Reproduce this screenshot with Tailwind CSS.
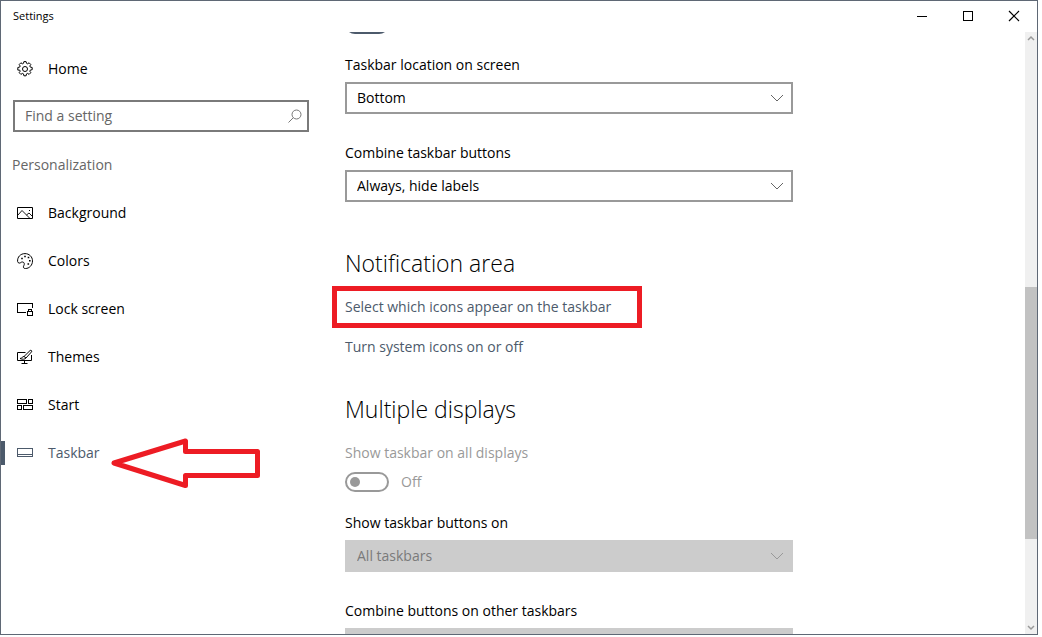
<!DOCTYPE html>
<html lang="en">

<head>
    <meta charset="UTF-8" />
    <meta name="viewport" content="width=device-width, initial-scale=1.0" />
    <title>Settings</title>
    <script src="https://cdn.jsdelivr.net/npm/@tailwindcss/browser@4"></script>
</head>

<body class="h-screen overflow-hidden bg-white pr-1 pb-0.5 font-['Open_Sans','Noto_Sans',sans-serif] text-sm text-black">

    <div class="flex h-full flex-col border border-[#5f6875] bg-white">

        <!-- Title bar -->
        <header class="flex h-[31px] shrink-0 items-center justify-between pb-0.5 pl-3">
            <h1 class="text-[11px]">Settings</h1>
            <div class="flex">
                <button aria-label="Minimize" class="flex w-[46px] justify-center">
                    <svg class="size-3" viewBox="0 0 12 12" fill="none" stroke="#000" shape-rendering="crispEdges"><path d="M1 6.5h10" /></svg>
                </button>
                <button aria-label="Maximize" class="flex w-[46px] justify-center">
                    <svg class="size-3" viewBox="0 0 12 12" fill="none" stroke="#000" shape-rendering="crispEdges"><path d="M1.5 1.5h9v9h-9z" /></svg>
                </button>
                <button aria-label="Close" class="flex w-[46px] justify-center">
                    <svg class="size-3" viewBox="0 0 12 12" fill="none" stroke="#000" stroke-width="1.2"><path d="M1 1l10 10M11 1L1 11" /></svg>
                </button>
            </div>
        </header>

        <div class="flex min-h-0 flex-1">

            <!-- Sidebar -->
            <aside class="w-82 shrink-0 pt-[13px]">
                <a href="#" class="flex h-12 items-center gap-[15px] pl-4">
                    <svg class="size-4" viewBox="0 0 16 16" fill="none" stroke="#000">
                        <path d="M6.9.6h2.2l.4 1.7 1.1.5 1.5-1 1.7 1.7-1 1.5.5 1.1 1.9.4v2.2l-1.9.4-.5 1.1 1 1.5-1.7 1.7-1.5-1-1.1.5-.4 1.9H6.9l-.4-1.9-1.1-.5-1.5 1-1.7-1.7 1-1.5-.5-1.1L.8 9.100V6.500l1.900-.4.5-1.100-1-1.500 1.700-1.700 1.500 1 1.100-.5z" />
                        <circle cx="8" cy="8" r="2.5" />
                    </svg>
                    Home
                </a>

                <div class="relative mt-[7px] mr-5 ml-3">
                    <input type="search" aria-label="Find a setting" placeholder="Find a setting" class="block h-8 w-full appearance-none border-2 border-[#7a7a7a] pr-8 pb-0.5 pl-2.5 placeholder:text-[#666]" />
                    <svg class="pointer-events-none absolute top-2 right-1.5 size-4" viewBox="0 0 16 16" fill="none" stroke="#777">
                        <circle cx="9.5" cy="6.5" r="4.5" />
                        <path d="M6.3 9.7L1.5 14.5" />
                    </svg>
                </div>

                <h2 class="mt-[23px] pl-[11px] leading-5 text-[#666]">Personalization</h2>

                <nav class="mt-3.5">
                    <a href="#" class="flex h-12 items-center gap-[15px] pl-4">
                        <svg class="size-4" viewBox="0 0 16 16" fill="none" stroke="#000">
                            <path d="M.5 2.5h15v11H.5z" />
                            <path stroke-width=".9" d="M1 10l4-4.500 7.500 7.500M9.500 10l2.500-2 3.500 3.500" />
                            <path d="M12 5.500h1" />
                        </svg>
                        Background
                    </a>
                    <a href="#" class="flex h-12 items-center gap-[15px] pl-4">
                        <svg class="size-4" viewBox="0 0 16 16" fill="none" stroke="#000">
                            <path d="M.6 8.500C.2 4 3.500.6 8 .6c4.200 0 7.500 3.200 7.500 7.300 0 4.300-3.200 7.600-7 7.600-2.200 0-2.600-1.300-1.700-2.800.9-1.600.6-3.400-1.100-3.700-1.600-.3-2 1.200-3.400 1.100C1.300 10 .7 9.400.6 8.500z" />
                            <path stroke-width="1.6" d="M4.200 5.500h1.600M7.200 3.500h1.600M10.700 4.500h1.600M12 7.800h1.600M10.500 11h1.600" />
                        </svg>
                        Colors
                    </a>
                    <a href="#" class="flex h-12 items-center gap-[15px] pl-4">
                        <svg class="size-4" viewBox="0 0 16 16" fill="none" stroke="#000" shape-rendering="crispEdges">
                            <path d="M9 11.500H.5v-9h15V7" />
                            <path d="M10.500 10.500h5v4h-5zM11.500 10V8.500h3V10" />
                        </svg>
                        Lock screen
                    </a>
                    <a href="#" class="flex h-12 items-center gap-[15px] pl-4">
                        <svg class="size-4" viewBox="0 0 16 16" fill="none" stroke="#000">
                            <path d="M8.500 3.500h-8v8h14V6M7.500 12v2M4.500 14.500h6" />
                            <path d="M7 7.500L13 1.600c1-.9 2.300.2 1.500 1.300L9 9M7 7.500L9 9M7 7.500C5.500 7.300 5 9.500 3 9.500c2 1.200 5.500.8 6-.5" />
                        </svg>
                        Themes
                    </a>
                    <a href="#" class="flex h-12 items-center gap-[15px] pl-4">
                        <svg class="size-4" viewBox="0 0 16 16" fill="none" stroke="#000" shape-rendering="crispEdges">
                            <path d="M.5 2.500h9v4h-9zM11.500 2.500h4v4h-4zM.5 8.500h4v4h-4zM6.500 8.500h9v4h-9z" />
                        </svg>
                        Start
                    </a>
                    <a href="#" aria-current="page" class="relative flex h-12 items-center gap-[15px] pl-4 text-[#4c5a6b]">
                        <span class="absolute left-0 h-6 w-1 bg-[#4c5a6b]"></span>
                        <svg class="size-4" viewBox="0 0 16 16" fill="none" stroke="#4c5a6b" shape-rendering="crispEdges">
                            <path d="M.5 3.500h15v8H.5zM1 9.500h14" />
                        </svg>
                        Taskbar
                        <!-- Arrow pointing at the current page -->
                        <svg class="absolute top-2 left-[109px] h-[52px] w-[152px]" viewBox="0 0 152 52" fill="none" stroke="#ed1c24" stroke-width="5">
                            <path stroke-linejoin="round" d="M4 26L75.500 4v10.500h72v24h-72V48.500z" />
                        </svg>
                    </a>
                </nav>
            </aside>

            <!-- Taskbar page, scrolled part of the way down -->
            <main class="min-w-0 flex-1 overflow-hidden pl-4">
                <div class="max-w-md">
                    <button role="switch" aria-checked="true" aria-label="Replace Command Prompt" class="-mt-[18px] block h-5 w-11 rounded-full bg-[#4c5a6b]"></button>

                    <label for="location" class="mt-[21px] block leading-5">Taskbar location on screen</label>
                    <div class="relative mt-[7px]">
                        <select id="location" class="block h-8 w-full appearance-none border-2 border-[#999] bg-white px-2.5">
                            <option>Bottom</option>
                        </select>
                        <svg class="pointer-events-none absolute top-2.5 right-2.5 size-3" viewBox="0 0 12 12" fill="none" stroke="#666"><path d="M0 3l6 6 6-6" /></svg>
                    </div>

                    <label for="combine" class="mt-[29px] block leading-5">Combine taskbar buttons</label>
                    <div class="relative mt-[7px]">
                        <select id="combine" class="block h-8 w-full appearance-none border-2 border-[#999] bg-white px-2.5">
                            <option>Always, hide labels</option>
                        </select>
                        <svg class="pointer-events-none absolute top-2.5 right-2.5 size-3" viewBox="0 0 12 12" fill="none" stroke="#666"><path d="M0 3l6 6 6-6" /></svg>
                    </div>

                    <h2 class="mt-[45px] text-[23px] leading-8 font-light">Notification area</h2>
                    <a href="#" class="mt-[7px] -ml-[13px] block h-[42px] w-[310px] border-5 border-[#ed1c24] pl-2 leading-8 text-[#4c5a6b]">Select which icons appear on the taskbar</a>
                    <a href="#" class="mt-[9px] block leading-5 text-[#4c5a6b]">Turn system icons on or off</a>

                    <h2 class="mt-9 text-[23px] leading-8 font-light">Multiple displays</h2>
                    <p id="all-displays" class="mt-[18px] leading-5 text-[#999]">Show taskbar on all displays</p>
                    <div class="mt-[9px] flex items-center gap-3 text-[#999]">
                        <button role="switch" aria-checked="false" aria-labelledby="all-displays" disabled class="flex h-5 w-11 items-center rounded-full border-2 border-[#999] pl-[3px]">
                            <span class="size-2.5 rounded-full bg-[#999]"></span>
                        </button>
                        <span class="leading-5">Off</span>
                    </div>

                    <label for="buttons-on" class="mt-[21px] block leading-5">Show taskbar buttons on</label>
                    <div class="relative mt-[7px]">
                        <select id="buttons-on" disabled class="block h-8 w-full appearance-none bg-[#ccc] px-3 text-[#7a7a7a] opacity-100">
                            <option>All taskbars</option>
                        </select>
                        <svg class="pointer-events-none absolute top-2.5 right-2.5 size-3" viewBox="0 0 12 12" fill="none" stroke="#999"><path d="M0 3l6 6 6-6" /></svg>
                    </div>

                    <label for="combine-other" class="mt-[29px] block leading-5">Combine buttons on other taskbars</label>
                    <select id="combine-other" disabled class="mt-[7px] block h-8 w-full appearance-none bg-[#ccc] px-3 text-[#7a7a7a] opacity-100">
                        <option>Always, hide labels</option>
                    </select>
                </div>
            </main>

            <!-- Scroll bar -->
            <div class="flex w-3 shrink-0 flex-col items-center bg-[#f0f0f0]">
                <svg class="h-3 w-2 shrink-0" viewBox="0 0 8 12" fill="none" stroke="#999" stroke-width="1.5"><path d="M1 8l3-3 3 3" /></svg>
                <div class="grow-[243]"></div>
                <div class="w-full grow-[252] bg-[#c2c2c2]"></div>
                <div class="grow-[83]"></div>
                <svg class="h-3 w-2 shrink-0" viewBox="0 0 8 12" fill="none" stroke="#999" stroke-width="1.5"><path d="M1 4l3 3 3-3" /></svg>
            </div>
        </div>
    </div>

</body>

</html>
